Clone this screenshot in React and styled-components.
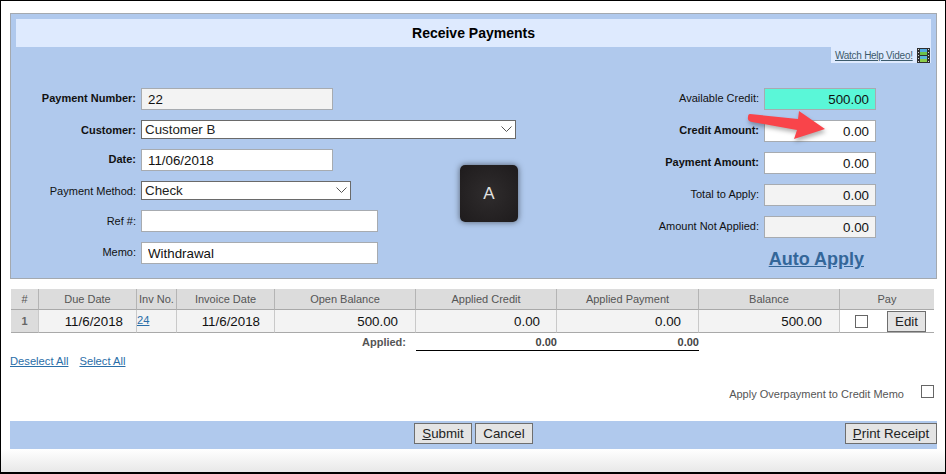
import React from 'react'
import styled, { createGlobalStyle } from 'styled-components'

const GlobalStyle = createGlobalStyle`
  html, body {
    margin: 0;
    padding: 0;
    background: #fff;
    font-family: "Liberation Sans", Arial, sans-serif;
  }
`

const Frame = styled.div`
  position: relative;
  box-sizing: border-box;
  width: 946px;
  height: 474px;
  overflow: hidden;
  display: flex;
  flex-direction: column;
  background: #fff;
  border-style: solid;
  border-color: #000;
  border-width: 1px 1px 2px 1px;
`
const Content = styled.div`
  padding: 12px 8px 0 9px;
`
const Fade = styled.div`
  flex: 1;
  background: linear-gradient(#fff, #e8e8e8);
`

const Panel = styled.section`
  position: relative;
  box-sizing: border-box;
  height: 266px;
  padding: 5px;
  background: #b0c9ed;
  border: 1px solid #a4a9af;
`
const Title = styled.h1`
  margin: 0;
  height: 28px;
  line-height: 28px;
  text-align: center;
  font-size: 14px;
  font-weight: bold;
  color: #000;
  background: #deeafe;
`
const HelpRow = styled.div`
  display: flex;
  justify-content: flex-end;
  margin-bottom: 25px;
`
const Help = styled.div`
  box-sizing: border-box;
  width: 100px;
  height: 16px;
  padding-left: 4px;
  display: flex;
  align-items: center;
  gap: 4px;
  background: #deeafe;
`
const HelpLink = styled.a`
  width: 78px;
  font-size: 10px;
  letter-spacing: -0.27px;
  color: #3c5b6c;
  text-decoration: underline;
  white-space: nowrap;
`
const FormBody = styled.div`
  display: flex;
  justify-content: space-between;
  align-items: flex-start;
`
const LeftFields = styled.div`
  display: grid;
  grid-template-columns: 120px auto;
  column-gap: 5px;
  row-gap: 10px;
  align-items: center;
  justify-items: start;
`
const RightFields = styled.div`
  display: grid;
  grid-template-columns: 130px 112px;
  column-gap: 5px;
  row-gap: 10px;
  align-items: center;
  margin-right: 55px;
`
const Label = styled.label`
  justify-self: end;
  padding-bottom: ${p => (p.$lift ? 2 : 0)}px;
  font-size: 11px;
  font-weight: ${p => (p.$bold ? 'bold' : 'normal')};
  color: #111;
  white-space: nowrap;
`
const Field = styled.input`
  box-sizing: border-box;
  display: block;
  width: ${p => p.$w || 112}px;
  height: 22px;
  padding: 0 6px;
  font-family: inherit;
  font-size: 13.33px;
  color: #111;
  text-align: ${p => (p.$num ? 'right' : 'left')};
  background: ${p => p.$bg || '#fff'};
  border: 1px solid #a7abb0;
  border-radius: 0;
  outline: none;
`
const SelectWrap = styled.div`
  position: relative;
  width: ${p => p.$w}px;
  height: 19px;
`
const Select = styled.select`
  box-sizing: border-box;
  display: block;
  width: 100%;
  height: 100%;
  padding: 0 0 0 3px;
  appearance: none;
  font-family: inherit;
  font-size: 13.33px;
  color: #222;
  background: #fff;
  border: 1px solid #6a6a6a;
  border-radius: 0;
  outline: none;
`
const Chevron = styled.svg`
  position: absolute;
  right: 4px;
  top: 6px;
  width: 11px;
  height: 6px;
`
const AutoApply = styled.a`
  grid-column: 1 / 3;
  justify-self: end;
  margin-right: 12px;
  line-height: 22px;
  font-size: 18px;
  font-weight: bold;
  color: #336699;
  text-decoration: underline;
`
const KeyCap = styled.div`
  position: absolute;
  left: 449px;
  top: 151px;
  width: 58px;
  height: 57px;
  display: flex;
  align-items: center;
  justify-content: center;
  font-size: 17px;
  color: #e2e2e2;
  background: radial-gradient(#2f2c2d, #1e1b1c);
  border-radius: 5px;
  box-shadow: 0 0 6px rgba(0, 0, 0, 0.55);
`
const Arrow = styled.svg`
  position: absolute;
  left: 739px;
  top: 104px;
  width: 100px;
  height: 45px;
  filter: drop-shadow(1px 3px 2px rgba(0, 0, 0, 0.3));
`

const Table = styled.table`
  width: 923px;
  margin: 10px 0 0 1px;
  table-layout: fixed;
  border-collapse: separate;
  border-spacing: 0;
`
const Th = styled.th`
  box-sizing: border-box;
  height: 21px;
  padding: 0;
  font-size: 11px;
  font-weight: normal;
  color: #555;
  background: #dcdcdc;
  border-right: 1px solid #b4b4b4;
  border-bottom: 1px solid #a9a9a9;
  &:last-child { border-right: none; }
`
const Td = styled.td`
  box-sizing: border-box;
  height: 23px;
  padding: 0 ${p => p.$pad || 0}px 0 0;
  font-size: 13.33px;
  color: #111;
  text-align: right;
  background: #f3f3f3;
  border-right: 1px solid #c9c9c9;
  border-bottom: 1px solid #a9a9a9;
`
const RowNum = styled(Td)`
  font-size: 11px;
  font-weight: bold;
  color: #666;
  text-align: center;
  background: #dcdcdc;
`
const InvCell = styled(Td)`
  padding-bottom: 4px;
  text-align: left;
`
const PayCell = styled(Td)`
  background: #fff;
  border-right: none;
`
const PayInner = styled.div`
  display: flex;
  align-items: center;
  gap: 19px;
  padding-left: 15px;
`
const Check = styled.input.attrs({ type: 'checkbox' })`
  appearance: none;
  box-sizing: border-box;
  width: 13px;
  height: 13px;
  margin: 0;
  flex: none;
  background: #fff;
  border: 1px solid #666;
  border-radius: 0;
`
const Link = styled.a`
  font-size: 11.2px;
  color: #2a6ea8;
  text-decoration: underline;
`
const AppliedLabel = styled.td`
  height: 18px;
  padding: 0 10px 0 0;
  font-size: 11px;
  font-weight: bold;
  color: #555;
  text-align: right;
`
const AppliedValue = styled.td`
  padding: 0;
  font-size: 11px;
  font-weight: bold;
  color: #444;
  text-align: right;
  border-bottom: 1px solid #000;
`
const SelectLinks = styled.div`
  display: flex;
  gap: 11px;
  height: 13px;
  margin-top: 4px;
  line-height: 13px;
`
const Overpay = styled.div`
  display: flex;
  justify-content: flex-end;
  align-items: flex-start;
  gap: 17px;
  margin: 17px 3px 0 0;
  font-size: 11px;
  color: #555;
`
const OverpayText = styled.span`
  padding-top: 3px;
`
const Footer = styled.div`
  display: grid;
  grid-template-columns: 1fr auto 1fr;
  align-items: start;
  box-sizing: border-box;
  height: 28px;
  margin-top: 21px;
  padding-top: 2px;
  background: #b0c9ed;
`
const Center = styled.div`
  grid-column: 2;
  display: flex;
  gap: 3px;
`
const Button = styled.button`
  box-sizing: border-box;
  width: ${p => p.$w}px;
  height: 21px;
  padding: 0;
  font-family: inherit;
  font-size: 13.33px;
  color: #222;
  background: #e4e4e4;
  border: 1px solid #6e6e6e;
  border-radius: 0;
  justify-self: ${p => (p.$end ? 'end' : 'auto')};
  & u { text-decoration: underline; }
`

const Film = () => (
  <svg width="13" height="15" viewBox="0 0 13 15">
    <rect width="13" height="15" fill="#2e2e2e" />
    <rect x="3" y="1" width="7" height="6" fill="#4fa8e0" />
    <rect x="3" y="4" width="7" height="3" fill="#6cc04a" />
    <rect x="3" y="8" width="7" height="6" fill="#58b4d8" />
    <rect x="3" y="11" width="7" height="3" fill="#8ccc4a" />
    {[1, 4, 7, 10, 13].map(y => (
      <g key={y} fill="#d8d8d8">
        <rect x="1" y={y} width="1" height="1" />
        <rect x="11" y={y} width="1" height="1" />
      </g>
    ))}
  </svg>
)

const Arrowhead = () => (
  <Chevron viewBox="0 0 11 6">
    <path d="M0.5 0.5 L5.5 5.5 L10.5 0.5" fill="none" stroke="#555" strokeWidth="1" />
  </Chevron>
)

const columns = [28, 98, 40, 98, 141, 141, 142, 141, 94]
const headers = ['#', 'Due Date', 'Inv No.', 'Invoice Date', 'Open Balance', 'Applied Credit', 'Applied Payment', 'Balance', 'Pay']

const App = () => {
  return (
    <Frame>
      <GlobalStyle />
      <Content>
        <Panel>
          <Title>Receive Payments</Title>
          <HelpRow>
            <Help>
              <HelpLink href="#">Watch Help Video!</HelpLink>
              <Film />
            </Help>
          </HelpRow>
          <FormBody>
            <LeftFields>
              <Label $bold $lift>Payment Number:</Label>
              <Field $w={192} $bg="#f3f3f3" readOnly value="22" />
              <Label $bold>Customer:</Label>
              <SelectWrap $w={375}>
                <Select defaultValue="Customer B"><option>Customer B</option></Select>
                <Arrowhead />
              </SelectWrap>
              <Label $bold $lift>Date:</Label>
              <Field $w={192} readOnly value="11/06/2018" />
              <Label>Payment Method:</Label>
              <SelectWrap $w={210}>
                <Select defaultValue="Check"><option>Check</option></Select>
                <Arrowhead />
              </SelectWrap>
              <Label>Ref #:</Label>
              <Field $w={237} readOnly value="" />
              <Label $lift>Memo:</Label>
              <Field $w={237} readOnly value="Withdrawal" />
            </LeftFields>
            <RightFields>
              <Label $lift>Available Credit:</Label>
              <Field $num $bg="#5af7d8" readOnly value="500.00" />
              <Label $bold $lift>Credit Amount:</Label>
              <Field $num readOnly value="0.00" />
              <Label $bold $lift>Payment Amount:</Label>
              <Field $num readOnly value="0.00" />
              <Label $lift>Total to Apply:</Label>
              <Field $num $bg="#f3f3f3" readOnly value="0.00" />
              <Label $lift>Amount Not Applied:</Label>
              <Field $num $bg="#f3f3f3" readOnly value="0.00" />
              <AutoApply href="#">Auto Apply</AutoApply>
            </RightFields>
          </FormBody>
          <KeyCap>A</KeyCap>
        </Panel>

        <Table>
          <colgroup>
            {columns.map((w, i) => <col key={i} width={w} />)}
          </colgroup>
          <thead>
            <tr>{headers.map(h => <Th key={h}>{h}</Th>)}</tr>
          </thead>
          <tbody>
            <tr>
              <RowNum>1</RowNum>
              <Td $pad={13}>11/6/2018</Td>
              <InvCell><Link href="#">24</Link></InvCell>
              <Td $pad={14}>11/6/2018</Td>
              <Td $pad={17}>500.00</Td>
              <Td $pad={16}>0.00</Td>
              <Td $pad={17}>0.00</Td>
              <Td $pad={17}>500.00</Td>
              <PayCell>
                <PayInner>
                  <Check />
                  <Button $w={39}>Edit</Button>
                </PayInner>
              </PayCell>
            </tr>
          </tbody>
          <tfoot>
            <tr>
              <AppliedLabel colSpan={5}>Applied:</AppliedLabel>
              <AppliedValue>0.00</AppliedValue>
              <AppliedValue>0.00</AppliedValue>
              <td colSpan={2} />
            </tr>
          </tfoot>
        </Table>

        <SelectLinks>
          <Link href="#">Deselect All</Link>
          <Link href="#">Select All</Link>
        </SelectLinks>

        <Overpay>
          <OverpayText>Apply Overpayment to Credit Memo</OverpayText>
          <Check />
        </Overpay>

        <Footer>
          <Center>
            <Button $w={58}><u>S</u>ubmit</Button>
            <Button $w={58}>Cancel</Button>
          </Center>
          <Button $w={92} $end><u>P</u>rint Receipt</Button>
        </Footer>
      </Content>
      <Fade />
      <Arrow viewBox="0 0 100 45">
        <path d="M10 9 L58 14 L59 6 L85 24 L54 34 L57 25 L12 17 Q7 16 8 12 Q8 9 10 9 Z" fill="#f9444a" />
      </Arrow>
    </Frame>
  )
}

export default App
